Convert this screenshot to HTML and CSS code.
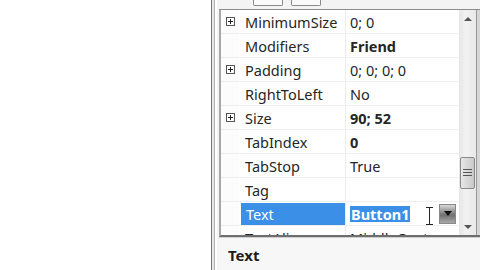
FILE: index.html
```html
<!DOCTYPE html>
<html lang="en">
<head>
    <meta charset="UTF-8">
    <title>Properties</title>
    <link rel="stylesheet" href="styles.css">
</head>
<body>
    <div class="canvas"></div>
    <div class="splitter"></div>

    <div class="panel">
        <div class="toolbar">
            <span class="tb-btn"></span>
            <span class="tb-btn"></span>
        </div>

        <div class="grid">
            <div class="rows">
                <div class="row">
                    <span class="gutter"><svg class="plus" width="9" height="9" viewBox="0 0 9 9"><rect x="0.5" y="0.5" width="8" height="8" fill="#fff" stroke="#555"/><path d="M2 4.5h5M4.5 2v5" stroke="#222"/></svg></span>
                    <span class="name">MinimumSize</span>
                    <span class="value">0; 0</span>
                </div>
                <div class="row">
                    <span class="gutter"></span>
                    <span class="name">Modifiers</span>
                    <span class="value bold">Friend</span>
                </div>
                <div class="row">
                    <span class="gutter"><svg class="plus" width="9" height="9" viewBox="0 0 9 9"><rect x="0.5" y="0.5" width="8" height="8" fill="#fff" stroke="#555"/><path d="M2 4.5h5M4.5 2v5" stroke="#222"/></svg></span>
                    <span class="name">Padding</span>
                    <span class="value">0; 0; 0; 0</span>
                </div>
                <div class="row">
                    <span class="gutter"></span>
                    <span class="name">RightToLeft</span>
                    <span class="value">No</span>
                </div>
                <div class="row">
                    <span class="gutter"><svg class="plus" width="9" height="9" viewBox="0 0 9 9"><rect x="0.5" y="0.5" width="8" height="8" fill="#fff" stroke="#555"/><path d="M2 4.5h5M4.5 2v5" stroke="#222"/></svg></span>
                    <span class="name">Size</span>
                    <span class="value bold">90; 52</span>
                </div>
                <div class="row">
                    <span class="gutter"></span>
                    <span class="name">TabIndex</span>
                    <span class="value bold">0</span>
                </div>
                <div class="row">
                    <span class="gutter"></span>
                    <span class="name">TabStop</span>
                    <span class="value">True</span>
                </div>
                <div class="row">
                    <span class="gutter"></span>
                    <span class="name">Tag</span>
                    <span class="value"></span>
                </div>
                <div class="row selected">
                    <span class="gutter"></span>
                    <span class="name">Text</span>
                    <span class="value edit">
                        <span class="sel">Button1</span>
                        <svg class="ibeam" width="9" height="18" viewBox="0 0 9 18"><path d="M1 0.5h7M1 17.5h7M4.5 0.5v17" stroke="#222" fill="none"/></svg>
                        <span class="drop"><span class="arrow"></span></span>
                    </span>
                </div>
                <div class="row">
                    <span class="gutter"></span>
                    <span class="name">TextAlign</span>
                    <span class="value">MiddleCenter</span>
                </div>
            </div>

            <div class="scrollbar">
                <span class="sb-arrow up"></span>
                <span class="sb-track">
                    <span class="sb-thumb"><span class="grip"></span></span>
                </span>
                <span class="sb-arrow down"></span>
            </div>
            <div class="edge"></div>
        </div>

        <div class="desc"><b>Text</b></div>
    </div>
</body>
</html>
```

FILE: styles.css
```css
body {
    margin: 0;
    width: 480px;
    height: 270px;
    overflow: hidden;
    display: flex;
    background: #fff;
    font-family: 'Noto Sans', sans-serif;
    font-size: 14.5px;
    color: #262626;
}

/* design surface on the left */
.canvas {
    width: 214px;
    background: #fff;
}

.splitter {
    width: 2px;
    margin-right: 2px;
    border-left: 1px solid #7a7a7a;
    border-right: 1px solid #b5b5b5;
    background: #e4e4e4;
}

.panel {
    flex: 1;
    display: flex;
    flex-direction: column;
    padding-left: 2px;
    background: #f4f4f4;
}

.toolbar {
    height: 9px;
    display: flex;
    align-items: flex-start;
    gap: 8px;
    padding-left: 34px;
    border-bottom: 1px solid #8c8c8c;
    overflow: hidden;
}

.tb-btn {
    width: 28px;
    height: 5px;
    border: 1px solid #8a8a8a;
    border-top: none;
    background: #fafafa;
    border-radius: 0 0 2px 2px;
}

.grid {
    height: 225px;
    display: flex;
    border-left: 2px solid #a8a8a8;
    border-bottom: 2px solid #6e6e6e;
    background: #fff;
}

.rows {
    width: 238px;
    overflow: hidden;
}

.row {
    height: 23px;
    display: grid;
    grid-template-columns: 18px 107px 113px;
    align-items: center;
    border-bottom: 1px solid #eeeeee;
}

.gutter {
    height: 100%;
    display: flex;
    align-items: center;
    padding-left: 5px;
    background: #fcfcfc;
}

.name {
    height: 100%;
    display: flex;
    align-items: center;
    padding-left: 6px;
    border-right: 1px solid #ececec;
}

.value {
    height: 100%;
    display: flex;
    align-items: center;
    padding-left: 4px;
}

.bold {
    font-weight: bold;
}

.selected .name {
    background: #3b8fe6;
    color: #fff;
    margin: 1px 0 0 2px;
    padding-left: 5px;
    height: calc(100% - 1px);
}

.edit {
    padding-left: 4px;
}

.sel {
    background: #3b8fe6;
    color: #fff;
    font-weight: bold;
    line-height: 16px;
    padding: 0 1px;
}

.ibeam {
    margin-left: 15px;
    margin-top: 5px;
}

.drop {
    width: 17px;
    height: 20px;
    margin-left: 5px;
    border: 1px solid #8a8a8a;
    background: linear-gradient(#d8d8d8, #707070 55%, #a8a8a8);
    display: flex;
    justify-content: center;
    padding-top: 6px;
    box-sizing: border-box;
}

.arrow {
    width: 0;
    height: 0;
    border-left: 4px solid transparent;
    border-right: 4px solid transparent;
    border-top: 5px solid #111;
}

.scrollbar {
    width: 17px;
    display: flex;
    flex-direction: column;
    background: linear-gradient(90deg, #e6e6e6, #f2f2f2 40%, #e8e8e8);
}

.sb-arrow {
    height: 17px;
    display: flex;
    justify-content: center;
    align-items: center;
}

.sb-arrow::before {
    content: '';
    border-left: 4px solid transparent;
    border-right: 4px solid transparent;
}

.up::before {
    border-bottom: 4px solid #555;
}

.down::before {
    border-top: 4px solid #555;
}

.sb-track {
    flex: 1;
    padding-top: 130px;
}

.sb-thumb {
    display: flex;
    justify-content: center;
    align-items: center;
    height: 30px;
    margin: 0 1px;
    border: 1px solid #8a8a8a;
    border-radius: 2px;
    background: linear-gradient(90deg, #e8e8e8, #c8c8c8);
}

.grip {
    width: 9px;
    height: 9px;
    background: repeating-linear-gradient(#555 0 1px, transparent 1px 3px);
}

.edge {
    width: 3px;
    background: #d6d6d6;
    border-left: 1px solid #9a9a9a;
}

.desc {
    flex: 1;
    padding: 7px 0 0 9px;
    background: #f7f7f7;
    border-top: 1px solid #cfcfcf;
    font-size: 15px;
    color: #1e1e1e;
}
```
